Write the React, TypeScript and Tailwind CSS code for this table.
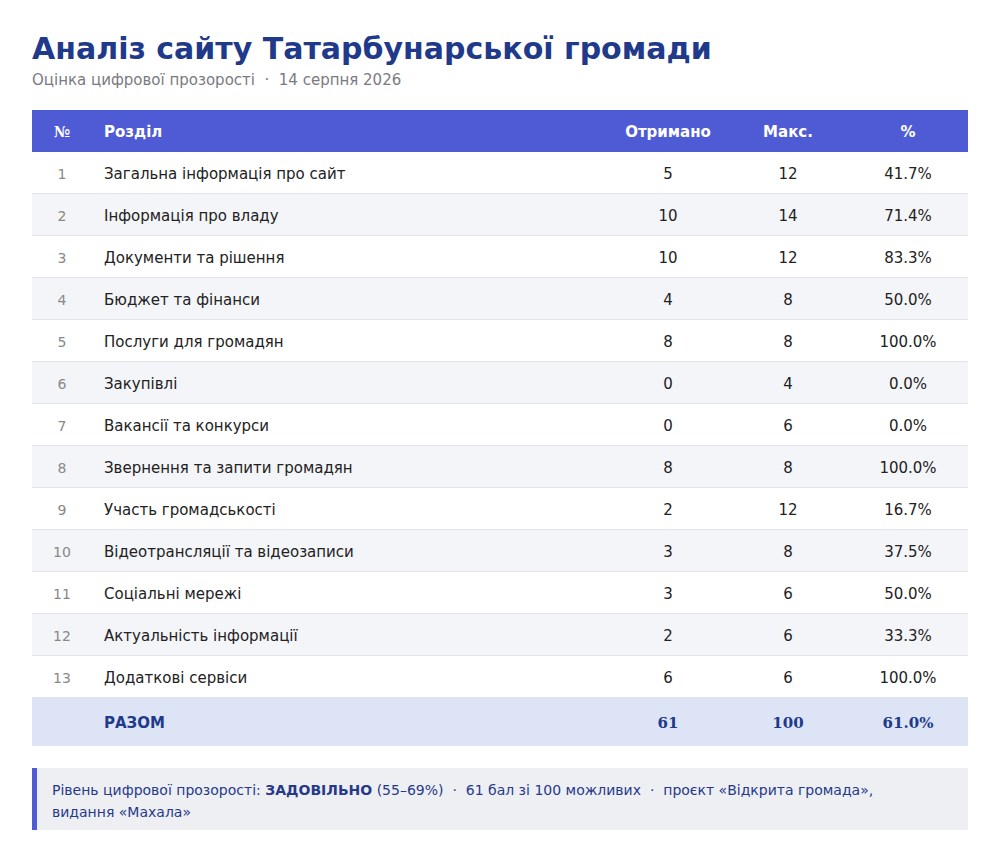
const rows = [
  { name: "Загальна інформація про сайт", got: 5, max: 12, pct: "41.7%" },
  { name: "Інформація про владу", got: 10, max: 14, pct: "71.4%" },
  { name: "Документи та рішення", got: 10, max: 12, pct: "83.3%" },
  { name: "Бюджет та фінанси", got: 4, max: 8, pct: "50.0%" },
  { name: "Послуги для громадян", got: 8, max: 8, pct: "100.0%" },
  { name: "Закупівлі", got: 0, max: 4, pct: "0.0%" },
  { name: "Вакансії та конкурси", got: 0, max: 6, pct: "0.0%" },
  { name: "Звернення та запити громадян", got: 8, max: 8, pct: "100.0%" },
  { name: "Участь громадськості", got: 2, max: 12, pct: "16.7%" },
  { name: "Відеотрансляції та відеозаписи", got: 3, max: 8, pct: "37.5%" },
  { name: "Соціальні мережі", got: 3, max: 6, pct: "50.0%" },
  { name: "Актуальність інформації", got: 2, max: 6, pct: "33.3%" },
  { name: "Додаткові сервіси", got: 6, max: 6, pct: "100.0%" },
];

const serif = "font-['DejaVu_Serif',serif]";

const App = () => {
  return (
    <div className="min-h-screen bg-white px-8 pt-[31px] font-['DejaVu_Sans',sans-serif]">
      <h1 className="text-[30px] font-bold leading-9 text-[#1f3a8a]">
        Аналіз сайту Татарбунарської громади
      </h1>
      <p className="mt-[3px] text-[15px] leading-5 text-[#7a7a82]">
        Оцінка цифрової прозорості&nbsp; · &nbsp;14 серпня 2026
      </p>

      <div className="mt-[20px]">
        <div className="flex h-[42px] items-center bg-[#4f5bd5] pt-[3px] text-[15px] font-bold text-white">
          <div className={`w-[60px] text-center ${serif}`}>№</div>
          <div className="flex-1 pl-3">Розділ</div>
          <div className="w-[120px] text-center">Отримано</div>
          <div className="w-[120px] text-center">Макс.</div>
          <div className="w-[120px] text-center">%</div>
        </div>

        {rows.map((row, index) => (
          <div
            key={index}
            className={`flex h-[42px] items-center border-b border-[#e2e4ea] pt-[3px] text-[15px] text-[#222] ${
              index % 2 === 1 ? "bg-[#f4f5f8]" : "bg-white"
            }`}
          >
            <div className="w-[60px] text-center text-[14px] text-[#888]">{index + 1}</div>
            <div className="flex-1 pl-3">{row.name}</div>
            <div className="w-[120px] text-center">{row.got}</div>
            <div className="w-[120px] text-center">{row.max}</div>
            <div className="w-[120px] text-center">{row.pct}</div>
          </div>
        ))}

        <div className="flex h-[48px] items-center bg-[#dde4f6] pt-[3px] text-[15px] font-bold text-[#1f3a8a]">
          <div className="w-[60px]" />
          <div className="flex-1 pl-3">РАЗОМ</div>
          <div className={`w-[120px] text-center ${serif}`}>61</div>
          <div className={`w-[120px] text-center ${serif}`}>100</div>
          <div className={`w-[120px] text-center ${serif}`}>61.0%</div>
        </div>
      </div>

      <div className="mt-[22px] border-l-[5px] border-[#4f5bd5] bg-[#eeeff3] pb-[7px] pl-[15px] pr-[40px] pt-[11px] text-[14px] leading-[22px] text-[#26398a]">
        Рівень цифрової прозорості: <span className="font-bold">ЗАДОВІЛЬНО</span> (55–69%)&nbsp; · &nbsp;61 бал зі 100
        можливих&nbsp; · &nbsp;проєкт «Відкрита громада», видання «Махала»
      </div>
    </div>
  );
};

export default App;
